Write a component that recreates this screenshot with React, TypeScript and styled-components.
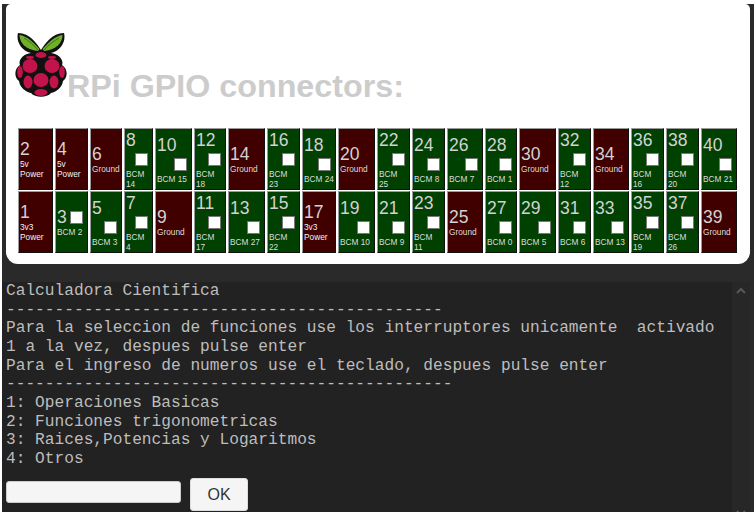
import React from "react";
import styled, { createGlobalStyle } from "styled-components";

const GlobalStyle = createGlobalStyle`
  html, body { margin: 0; padding: 0; background: #fff; }
  body { font-family: "Liberation Sans", Arial, sans-serif; }
`;

const COLUMNS = [35, 33, 32, 29, 37, 32, 37, 33, 34, 37, 33, 33, 36, 32, 37, 33, 36, 33, 33, 36];

type Pin = { n: number; label: string; bcm?: boolean; inline?: boolean };

const g = (n: number, b: number, inline?: boolean): Pin => ({ n, label: `BCM ${b}`, bcm: true, inline });
const gnd = (n: number): Pin => ({ n, label: "Ground" });
const pwr = (n: number, v: string): Pin => ({ n, label: `${v} Power` });

const TOP: Pin[] = [
  pwr(2, "5v"), pwr(4, "5v"), gnd(6), g(8, 14), g(10, 15), g(12, 18), gnd(14), g(16, 23), g(18, 24), gnd(20),
  g(22, 25), g(24, 8), g(26, 7), g(28, 1), gnd(30), g(32, 12), gnd(34), g(36, 16), g(38, 20), g(40, 21),
];
const BOTTOM: Pin[] = [
  pwr(1, "3v3"), g(3, 2, true), g(5, 3), g(7, 4), gnd(9), g(11, 17), g(13, 27), g(15, 22), pwr(17, "3v3"), g(19, 10),
  g(21, 9), g(23, 11), gnd(25), g(27, 0), g(29, 5), g(31, 6), g(33, 13), g(35, 19), g(37, 26), gnd(39),
];

const Frame = styled.div`
  margin: 4px 2px 4px 2px;
  width: 752px;
  height: 508px;
  background: #2a2a2a;
  display: flex;
  flex-direction: column;
  overflow: hidden;
`;

const Panel = styled.section`
  margin: 0 4px;
  height: 260px;
  flex: none;
  background: #fff;
  border-radius: 5px 5px 12px 12px;
  padding-left: 12px;
  box-sizing: border-box;
`;

const Heading = styled.header`
  display: flex;
  align-items: flex-end;
  height: 100px;
`;

const Title = styled.h1`
  margin: 0 0 -1px;
  font-size: 32.25px;
  line-height: 37px;
  font-weight: bold;
  color: #cccccc;
`;

const Logo = styled.svg`
  display: block;
  flex: none;
  width: 52px;
  height: 66px;
  margin: 0 0 6px -3px;
`;

const Board = styled.div`
  margin-top: 24px;
  display: grid;
  grid-template-columns: ${COLUMNS.map((c) => `${c}px`).join(" ")};
  grid-template-rows: 62px 62px;
  gap: 1px 2px;
`;

const Cell = styled.div<{ $bcm?: boolean }>`
  box-sizing: border-box;
  background: ${(p) => (p.$bcm ? "#004000" : "#400000")};
  color: #d2d2d2;
  border: 1px solid;
  border-color: #9a9a9a #111 #111 #9a9a9a;
  padding: 0 1px;
  display: flex;
  flex-direction: column;
  justify-content: center;
  overflow: hidden;
`;

const Head = styled.div<{ $inline?: boolean }>`
  display: flex;
  flex-direction: ${(p) => (p.$inline ? "row" : "column")};
  align-items: ${(p) => (p.$inline ? "center" : "stretch")};
  gap: ${(p) => (p.$inline ? "3px" : "0")};
`;

const PinNumber = styled.span`
  font-size: 17.5px;
  line-height: 20px;
`;

const Check = styled.span<{ $inline?: boolean }>`
  display: block;
  box-sizing: border-box;
  width: 13px;
  height: 13px;
  background: #fff;
  border: 1px solid #777;
  align-self: ${(p) => (p.$inline ? "center" : "flex-end")};
  margin: ${(p) => (p.$inline ? "0" : "3px 3px 3px 0")};
`;

const Label = styled.span<{ $power?: boolean }>`
  font-size: 8.3px;
  line-height: 10px;
  color: ${(p) => (p.$power ? "#f2f2f2" : "#dcdcdc")};
`;

const Lower = styled.div`
  flex: 1;
  display: flex;
  min-height: 0;
  padding-top: 18px;
`;

const Console = styled.main`
  flex: 1;
  background: #222222;
  padding: 0 0 0 4px;
  min-width: 0;
  display: flex;
  flex-direction: column;
`;

const Output = styled.pre`
  margin: 0;
  font-family: "Liberation Mono", "Courier New", monospace;
  font-size: 16.18px;
  line-height: 18.67px;
  color: #bdbdbd;
  height: 196px;
  white-space: pre;
`;

const Prompt = styled.form`
  display: flex;
  align-items: center;
  gap: 9px;
`;

const Field = styled.input`
  box-sizing: border-box;
  width: 175px;
  height: 22px;
  margin-bottom: 5px;
  background: #f5f5f5;
  border: 1px solid #ccc;
  border-radius: 3px;
  padding: 0;
`;

const Ok = styled.button`
  box-sizing: border-box;
  width: 58px;
  height: 33px;
  background: #f5f5f5;
  color: #333;
  border: 1px solid #ddd;
  border-radius: 3px;
  font-family: "Liberation Sans", Arial, sans-serif;
  font-size: 16px;
  padding: 0;
`;

const Scrollbar = styled.div`
  flex: none;
  width: 18px;
  margin-right: 4px;
  background: #272727;
  display: flex;
  flex-direction: column;
  justify-content: space-between;
  align-items: center;
  padding: 5px 0 0;
  color: #585858;
  box-sizing: border-box;
`;

const Arrow = styled.svg<{ $down?: boolean }>`
  display: block;
  width: 10px;
  height: 7px;
  margin-bottom: ${(p) => (p.$down ? "-5px" : "0")};
`;

const LogoArt = () => (
  <Logo viewBox="15 32 52 66">
    <path
      d="M41 50 C37 44 30 33 18 33 C16 40 20 50 31 53 C23 54 18 60 20 65 C14 69 14 77 19 81 C20 88 26 92 31 93 C35 98 47 98 51 93 C56 92 62 88 63 81 C68 77 68 69 62 65 C64 60 59 54 51 53 C62 50 66 40 64 33 C52 33 45 44 41 50 Z"
      fill="#111"
    />
    <path d="M39.5 49 C33 42 27 36 19.5 35 C19.5 42 25 50 38 51 Z" fill="#6fb02a" />
    <path d="M42.5 49 C49 42 55 36 62.5 35 C62.5 42 57 50 44 51 Z" fill="#6fb02a" />
    <path d="M24 38 C29 41 34 45 38 50 M59 38 C54 41 48 45 44 50" stroke="#2c5a12" strokeWidth="0.7" fill="none" />
    <g fill="#c2134b">
      <ellipse cx="41" cy="55" rx="5.5" ry="3" />
      <ellipse cx="30" cy="66" rx="7.5" ry="7" />
      <ellipse cx="52" cy="66" rx="7.5" ry="7" />
      <ellipse cx="20" cy="72" rx="2.8" ry="6" />
      <ellipse cx="62" cy="72" rx="2.8" ry="6" />
      <ellipse cx="41" cy="80" rx="7.5" ry="7" />
      <ellipse cx="28" cy="82" rx="4.5" ry="6.5" />
      <ellipse cx="54" cy="82" rx="4.5" ry="6.5" />
      <ellipse cx="41" cy="92.5" rx="6.5" ry="3.4" />
      <ellipse cx="30" cy="57.5" rx="4" ry="1.4" />
      <ellipse cx="52" cy="57.5" rx="4" ry="1.4" />
    </g>
  </Logo>
);

const PinCell = ({ pin }: { pin: Pin }) => {
  const words = pin.label.split(" ");
  return (
    <Cell $bcm={pin.bcm}>
      <Head $inline={pin.inline}>
        <PinNumber>{pin.n}</PinNumber>
        {pin.bcm && <Check $inline={pin.inline} />}
      </Head>
      <Label $power={!pin.bcm && words.length > 1}>
        {pin.bcm ? pin.label : words.map((w, i) => <div key={i}>{w}</div>)}
      </Label>
    </Cell>
  );
};

const TEXT = `Calculadora Cientifica
---------------------------------------------
Para la seleccion de funciones use los interruptores unicamente  activado
1 a la vez, despues pulse enter
Para el ingreso de numeros use el teclado, despues pulse enter
----------------------------------------------
1: Operaciones Basicas
2: Funciones trigonometricas
3: Raices,Potencias y Logaritmos
4: Otros`;

export default function App() {
  return (
    <>
      <GlobalStyle />
      <Frame>
        <Panel>
          <Heading>
            <LogoArt />
            <Title>RPi GPIO connectors:</Title>
          </Heading>
          <Board>
            {TOP.map((p) => (
              <PinCell key={p.n} pin={p} />
            ))}
            {BOTTOM.map((p) => (
              <PinCell key={p.n} pin={p} />
            ))}
          </Board>
        </Panel>
        <Lower>
          <Console>
            <Output>{TEXT}</Output>
            <Prompt onSubmit={(e) => e.preventDefault()}>
              <Field type="text" />
              <Ok type="button">OK</Ok>
            </Prompt>
          </Console>
          <Scrollbar>
            <Arrow viewBox="0 0 10 7">
              <path d="M1 6 L5 2 L9 6" stroke="currentColor" strokeWidth="2" fill="none" />
            </Arrow>
            <Arrow $down viewBox="0 0 10 7">
              <path d="M1 1 L5 5 L9 1" stroke="currentColor" strokeWidth="2" fill="none" />
            </Arrow>
          </Scrollbar>
        </Lower>
      </Frame>
    </>
  );
}
